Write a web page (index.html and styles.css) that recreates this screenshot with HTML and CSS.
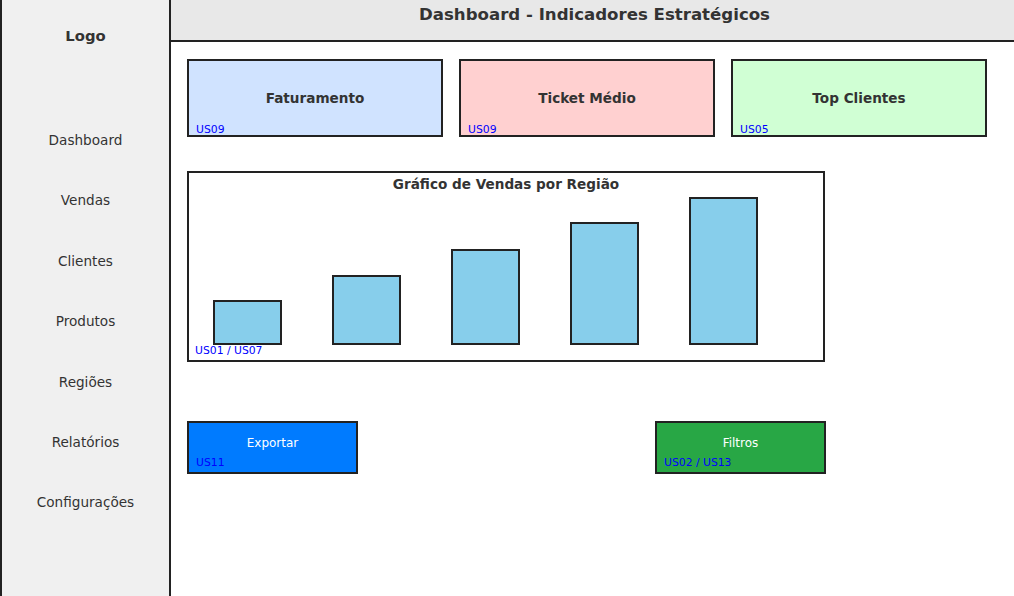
FILE: index.html
```html
<!DOCTYPE html>
<html lang="pt">
<head>
<meta charset="utf-8">
<title>Dashboard - Indicadores Estratégicos</title>
<link rel="stylesheet" href="styles.css">
</head>
<body>
<div class="app">
  <aside class="sidebar">
    <div class="logo">Logo</div>
    <nav class="nav">
      <div class="nav-item">Dashboard</div>
      <div class="nav-item">Vendas</div>
      <div class="nav-item">Clientes</div>
      <div class="nav-item">Produtos</div>
      <div class="nav-item">Regiões</div>
      <div class="nav-item">Relatórios</div>
      <div class="nav-item">Configurações</div>
    </nav>
  </aside>
  <main class="main">
    <header class="header">Dashboard - Indicadores Estratégicos</header>
    <section class="content">
      <div class="cards">
        <div class="card card-blue"><span class="card-title">Faturamento</span><span class="tag tag-card">US09</span></div>
        <div class="card card-pink"><span class="card-title">Ticket Médio</span><span class="tag tag-card">US09</span></div>
        <div class="card card-green"><span class="card-title">Top Clientes</span><span class="tag tag-card">US05</span></div>
      </div>
      <div class="chart">
        <div class="chart-title">Gráfico de Vendas por Região</div>
        <div class="bars">
          <div class="bar" style="height:45px"></div>
          <div class="bar" style="height:70px"></div>
          <div class="bar" style="height:96px"></div>
          <div class="bar" style="height:123px"></div>
          <div class="bar" style="height:148px"></div>
        </div>
        <span class="tag tag-chart">US01 / US07</span>
      </div>
      <div class="actions">
        <div class="btn btn-blue"><span class="btn-text">Exportar</span><span class="tag tag-btn">US11</span></div>
        <div class="btn btn-green"><span class="btn-text">Filtros</span><span class="tag tag-btn">US02 / US13</span></div>
      </div>
    </section>
  </main>
</div>
</body>
</html>
```
FILE: styles.css
```css
* { box-sizing: border-box; }
html, body {
  margin: 0;
  padding: 0;
  background: #fff;
  font-family: "DejaVu Sans", "Liberation Sans", sans-serif;
  color: #333;
}
.app {
  display: flex;
  width: 1014px;
  height: 596px;
  overflow: hidden;
}
.sidebar {
  width: 171px;
  flex: none;
  background: #f0f0f0;
  border-left: 2px solid #222;
  border-right: 2px solid #222;
  display: flex;
  flex-direction: column;
  align-items: center;
  padding-top: 26px;
}
.logo {
  font-weight: bold;
  font-size: 14.8px;
  line-height: 20px;
  color: #333;
}
.nav {
  margin-top: 84px;
  display: flex;
  flex-direction: column;
  align-items: center;
  gap: 40.4px;
}
.nav-item {
  font-size: 13.6px;
  line-height: 20px;
  color: #333;
}
.main {
  flex: 1;
  display: flex;
  flex-direction: column;
}
.header {
  height: 42px;
  flex: none;
  background: #e8e8e8;
  border-bottom: 2px solid #222;
  text-align: center;
  font-weight: bold;
  font-size: 16.6px;
  line-height: 20px;
  padding: 5px 0 0 4px;
  color: #333;
}
.content {
  padding: 17px 0 0 16px;
}
.cards {
  display: flex;
  gap: 16px;
}
.card {
  position: relative;
  width: 256px;
  height: 78px;
  border: 2px solid #222;
  display: flex;
  align-items: center;
  justify-content: center;
}
.card-blue { background: #d0e3ff; }
.card-pink { background: #ffd0d0; }
.card-green { background: #d0ffd4; }
.card-title {
  font-weight: bold;
  font-size: 13.6px;
  line-height: 18px;
  color: #333;
}
.tag {
  position: absolute;
  font-size: 10.8px;
  line-height: 12px;
  color: #0000ff;
  white-space: nowrap;
}
.tag-card { left: 7px; bottom: -1px; }
.chart {
  position: relative;
  margin-top: 34px;
  width: 638px;
  height: 191px;
  border: 2px solid #222;
  display: flex;
  flex-direction: column;
  padding: 2px 0 15px 0;
}
.chart-title {
  text-align: center;
  font-weight: bold;
  font-size: 13.6px;
  line-height: 18px;
  color: #333;
}
.bars {
  flex: 1;
  display: flex;
  align-items: flex-end;
  gap: 50px;
  padding-left: 24px;
}
.bar {
  width: 69px;
  background: #87ceeb;
  border: 2px solid #222;
}
.tag-chart { left: 6px; bottom: 3px; }
.actions {
  margin-top: 59px;
  width: 639px;
  display: flex;
  justify-content: space-between;
}
.btn {
  position: relative;
  width: 171px;
  height: 53px;
  border: 2px solid #222;
  text-align: center;
  padding-top: 10px;
}
.btn-blue { background: #007bff; }
.btn-green { background: #28a745; }
.btn-text {
  display: block;
  color: #fff;
  font-size: 12px;
  line-height: 20px;
}
.tag-btn { left: 7px; bottom: 3px; }
```
